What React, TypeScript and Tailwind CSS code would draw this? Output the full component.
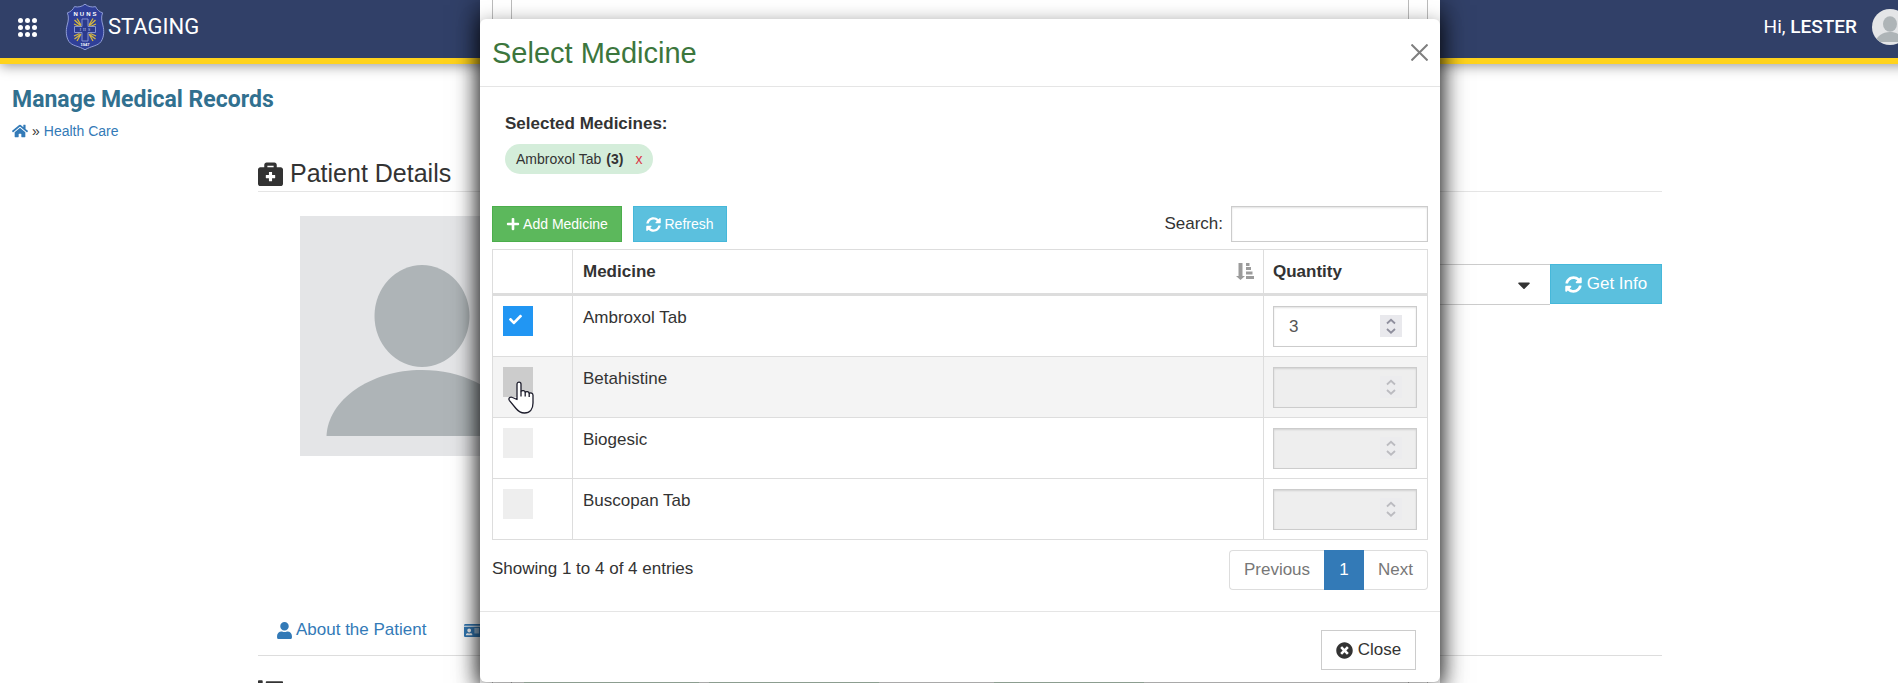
import React, { useState } from 'react';
import {
  FaBriefcaseMedical,
  FaCaretDown,
  FaCheck,
  FaHome,
  FaIdCard,
  FaList,
  FaPlus,
  FaSyncAlt,
  FaTimesCircle,
  FaUser,
} from 'react-icons/fa';

interface Medicine {
  id: number;
  name: string;
}

const MEDICINES: Medicine[] = [
  { id: 1, name: 'Ambroxol Tab' },
  { id: 2, name: 'Betahistine' },
  { id: 3, name: 'Biogesic' },
  { id: 4, name: 'Buscopan Tab' },
];

const HOVERED_ID = 2;

const SchoolCrest: React.FC = () => (
  <svg viewBox="0 0 40 48" className="h-12 w-10" aria-hidden="true">
    <path
      d="M20 1.2 C17 3.6 13 4.6 9.5 3.6 C8 6.6 5.6 9 2.4 9.8 C4 14 3.4 18 2.2 22 C0.6 28 1 34 4 38.6 C7 43 14 43 20 46.8 C26 43 33 43 36 38.6 C39 34 39.4 28 37.8 22 C36.6 18 36 14 37.6 9.8 C34.4 9 32 6.6 30.5 3.6 C27 4.6 23 3.6 20 1.2 Z"
      fill="#2f3f98"
      stroke="#8f9cd6"
      strokeWidth="1"
    />
    <g stroke="#d6b83e" strokeWidth="1.3">
      <path d="M16 23 L9.5 17 M16 22 L12 15.5 M14.5 23.500 L9 21 M24 23 L30.5 17 M24 22 L28 15.5 M25.5 23.500 L31 21" />
      <path d="M16 31 L9.5 36 M16 31 L12 38 M14.5 30.500 L9 33 M24 31 L30.5 36 M24 31 L28 38 M25.5 30.500 L31 33" />
    </g>
    <path
      d="M17 16 H23 V23.500 H30.5 V29.5 H23 V38 H17 V29.5 H9.5 V23.500 H17 Z"
      fill="#2b3a8c"
      stroke="#8f9cd6"
      strokeWidth="0.9"
    />
    <text x="21" y="13.2" textAnchor="middle" fontSize="6" fontWeight="700" letterSpacing="2" fill="#fff" fontFamily="Liberation Sans, sans-serif">NUNS</text>
    <text x="21" y="28" textAnchor="middle" fontSize="4" letterSpacing="2" fill="#c5cdf0" fontFamily="Liberation Serif, serif">IHS</text>
    <text x="20" y="42.5" textAnchor="middle" fontSize="4" fontWeight="700" fill="#fff" fontFamily="Liberation Sans, sans-serif">1947</text>
  </svg>
);

const PersonImage: React.FC<{ className: string }> = ({ className }) => (
  <svg viewBox="0 0 244 240" className={className} preserveAspectRatio="none" aria-hidden="true">
    <rect width="244" height="240" fill="#e4e5e7" />
    <ellipse cx="122" cy="100" rx="47.5" ry="51" fill="#aeb4b7" />
    <path d="M26.500 220 C28 184 70 154 122 154 C174 154 216 184 217.500 220 Z" fill="#aeb4b7" />
  </svg>
);

const SortIcon: React.FC = () => (
  <svg viewBox="0 0 18 17" className="h-[17px] w-[18px] shrink-0" fill="#9b9b9b" aria-hidden="true">
    <path d="M2.500 0 H6.500 V13 H9 L4.500 17 L0 13 H2.500 Z" />
    <path d="M10 0 H13.500 V3 H10 Z M10 4 H15 V7 H10 Z M10 8.500 H16.500 V11.500 H10 Z M10 13 H18 V16 H10 Z" />
  </svg>
);

const HandCursor: React.FC = () => (
  <svg viewBox="0 0 26 33" className="pointer-events-none absolute left-[15px] top-[24px] h-[33px] w-[26px]" aria-hidden="true">
    <path
      d="M9 18.500 V3.200 C9 0.400 13 0.400 13 3.200 V10.500 C14 9 17 9.500 17.200 11.300 C18.200 10 21 10.500 21.200 12.500 C22.500 11.300 25 12 25 14.300 V22 C25 28 22 32 16.500 32 C12.500 32 10 30 8 27.500 L1.300 19.300 C0 17 2.500 15.300 4.500 16.500 Z"
      fill="#fff"
      stroke="#1c1c2b"
      strokeWidth="1.3"
      strokeLinejoin="round"
    />
    <path d="M13 10.500 V15.500 M17.200 11.300 V15.500 M21.200 12.500 V16" fill="none" stroke="#1c1c2b" strokeWidth="1.3" />
  </svg>
);

const TopBar: React.FC = () => (
  <header className="flex h-16 items-center border-b-[6px] border-[#ffd31c] bg-[#314068] pb-1 pl-[18px] pr-3 font-[Roboto,sans-serif] text-white shadow-[0_2px_12px_rgba(0,0,0,0.4)]">
    <button type="button" aria-label="Open menu">
      <svg viewBox="0 0 19 19" className="size-[19px]" fill="#fff" aria-hidden="true">
        {[2.5, 9.5, 16.5].map((y) =>
          [2.5, 9.5, 16.5].map((x) => <circle key={`${x}-${y}`} cx={x} cy={y} r="2.5" />)
        )}
      </svg>
    </button>
    <a href="#home" className="ml-7 flex items-center">
      <SchoolCrest />
      <span className="ml-[3px] text-[22px] leading-7">STAGING</span>
    </a>
    <div className="ml-auto flex items-center gap-[15px]">
      <span className="text-[19px] leading-6">
        Hi, <strong className="font-medium">LESTER</strong>
      </span>
      <PersonImage className="size-9 rounded-full" />
    </div>
  </header>
);

const PatientPage: React.FC = () => (
  <main>
    <div className="px-3 pt-[22px]">
      <h1 className="font-[Roboto,sans-serif] text-[23px] font-bold leading-7 text-[#31708f]">Manage Medical Records</h1>
      <nav className="mt-1.5 flex items-center gap-1 text-[14px] leading-[22px] text-[#337ab7]" aria-label="Breadcrumb">
        <a href="#home" aria-label="Home">
          <FaHome className="size-4" />
        </a>
        <span className="text-[#333]">»</span>
        <a href="#health-care">Health Care</a>
      </nav>
    </div>

    <div className="mx-[258px] mt-4">
      <h2 className="flex items-center gap-[7px] border-b border-[#e5e5e5] pb-0.5 text-[25px] leading-[31px]">
        <FaBriefcaseMedical className="size-[25px]" />
        Patient Details
      </h2>

      <div className="mt-6 flex items-start pl-[42px]">
        <PersonImage className="h-[240px] w-[244px]" />
        <div className="ml-auto mt-12 flex w-[600px]">
          <button type="button" aria-label="Select record" className="flex h-[41px] flex-1 items-center justify-end border border-r-0 border-[#ccc] pr-4">
            <FaCaretDown className="size-5" />
          </button>
          <button type="button" className="flex h-10 w-28 items-center justify-center gap-[5px] border border-[#46b8da] bg-[#5bc0de] text-[17px] text-white">
            <FaSyncAlt className="size-[17px]" />
            Get Info
          </button>
        </div>
      </div>

      <nav className="mt-[149px] flex h-[51px] items-center gap-[38px] border-b border-[#ddd] pl-[18px] text-[17px] text-[#337ab7]" aria-label="Patient sections">
        <a href="#about" className="flex items-center gap-[3px]">
          <FaUser className="size-[17px]" />
          About the Patient
        </a>
        <a href="#records" aria-label="Records">
          <FaIdCard className="size-[17px]" />
        </a>
      </nav>
      <FaList className="mt-[22px] size-[25px]" />
    </div>
  </main>
);

// Dialog that stays open underneath the medicine picker.
const ParentDialog: React.FC = () => (
  <div className="absolute inset-0 flex justify-center">
    <div className="flex w-[960px] justify-center bg-white px-3 shadow-[0_5px_25px_rgba(0,0,0,0.8)]">
      <div className="flex-1 border-x border-[#bbb] px-[18px]">
        <div className="flex h-full items-end gap-2.5 border-x border-[#bbb]">
          <div className="ml-3 h-px w-[175px] bg-[#d4edda]" />
          <div className="h-px w-[170px] bg-[#d4edda]" />
          <div className="ml-[105px] h-px w-[150px] bg-[#d4edda]" />
        </div>
      </div>
    </div>
  </div>
);

interface QuantityInputProps {
  name: string;
  value: string;
  disabled: boolean;
  onChange: (value: string) => void;
}

const QuantityInput: React.FC<QuantityInputProps> = ({ name, value, disabled, onChange }) => (
  <div className="relative">
    <input
      type="number"
      aria-label={`Quantity of ${name}`}
      value={value}
      disabled={disabled}
      onChange={(e) => onChange(e.target.value)}
      className="block h-[41px] w-full appearance-none rounded-none border border-[#ccc] bg-white px-[15px] text-[17px] text-[#555] shadow-[inset_0_1px_2px_rgba(0,0,0,0.12)] outline-none [appearance:textfield] disabled:bg-[#eee]"
    />
    <span className={`pointer-events-none absolute right-[15px] top-[9px] flex size-[22px] items-center justify-center ${disabled ? 'bg-[#ececee] text-[#bbbbc0]' : 'bg-[#e9e9ed] text-[#8f8f9d]'}`}>
      <svg viewBox="0 0 10 16" className="h-4 w-2.5" fill="none" stroke="currentColor" strokeWidth="1.8" aria-hidden="true">
        <path d="M1 5.500 L5 1.800 L9 5.500 M1 11 L5 14.700 L9 11" />
      </svg>
    </span>
  </div>
);

const MedicineDialog: React.FC = () => {
  const [quantities, setQuantities] = useState<Record<number, string>>({ 1: '3' });
  const [search, setSearch] = useState('');

  const toggle = (id: number) =>
    setQuantities((prev) => {
      const next = { ...prev };
      if (id in next) delete next[id];
      else next[id] = '1';
      return next;
    });

  const rows = MEDICINES.filter((m) => m.name.toLowerCase().includes(search.toLowerCase()));

  return (
    <div className="absolute inset-0 flex items-start justify-center pt-[19px]">
      <section role="dialog" aria-label="Select Medicine" className="w-[960px] rounded-md bg-white shadow-[0_5px_20px_rgba(0,0,0,0.5)]">
        <div className="flex h-[68px] items-center justify-between border-b border-[#e5e5e5] px-3">
          <h2 className="text-[29px] leading-8 text-[#3c763d]">Select Medicine</h2>
          <button type="button" aria-label="Dismiss">
            <svg viewBox="0 0 17 17" className="size-[17px]" stroke="#7f7f7f" strokeWidth="2" aria-hidden="true">
              <path d="M0.500 0.500 L16.500 16.500 M16.500 0.500 L0.500 16.500" />
            </svg>
          </button>
        </div>

        <div className="px-3 pb-[21px] pt-[25px]">
          <div className="px-[13px]">
            <h3 className="text-[17px] font-bold leading-6">Selected Medicines:</h3>
            <div className="mt-2 flex gap-2">
              {MEDICINES.filter((m) => m.id in quantities).map((m) => (
                <span key={m.id} className="flex h-[30px] items-center rounded-full bg-[#d4edda] px-[11px] text-[14px]">
                  {m.name}
                  <strong className="ml-[5px]">({quantities[m.id]})</strong>
                  <button type="button" aria-label={`Remove ${m.name}`} onClick={() => toggle(m.id)} className="ml-3 text-[14px] text-[#dc3545]">
                    x
                  </button>
                </span>
              ))}
            </div>
          </div>

          <div className="mt-8 flex items-center text-[14px] text-white">
            <button type="button" className="flex h-9 w-[130px] items-center justify-center gap-[3px] border border-[#4cae4c] bg-[#5cb85c]">
              <FaPlus className="size-[14px]" />
              Add Medicine
            </button>
            <button type="button" className="ml-[11px] flex h-9 w-[94px] items-center justify-center gap-[3px] border border-[#46b8da] bg-[#5bc0de]">
              <FaSyncAlt className="size-[15px]" />
              Refresh
            </button>
            <label className="ml-auto flex items-center gap-2 text-[17px] text-[#333]">
              Search:
              <input
                type="search"
                value={search}
                onChange={(e) => setSearch(e.target.value)}
                className="h-9 w-[197px] border border-[#ccc] px-2 text-[14px] shadow-[inset_0_1px_2px_rgba(0,0,0,0.12)] outline-none"
              />
            </label>
          </div>

          <table className="mt-[7px] w-full table-fixed border-separate border-spacing-0 border-l border-t border-[#ddd] text-left text-[17px] leading-6">
            <thead>
              <tr>
                <th className="h-[46px] w-20 border-b-[3px] border-r border-[#ddd]" aria-label="Selected" />
                <th className="border-b-[3px] border-r border-[#ddd] pl-2.5 pr-[9px]">
                  <span className="flex items-center justify-between">
                    Medicine
                    <SortIcon />
                  </span>
                </th>
                <th className="w-[164px] border-b-[3px] border-r border-[#ddd] px-[9px]">Quantity</th>
              </tr>
            </thead>
            <tbody>
              {rows.map((m) => {
                const checked = m.id in quantities;
                const hovered = m.id === HOVERED_ID;
                return (
                  <tr key={m.id} className={hovered ? 'bg-[#f4f4f4]' : 'bg-white'}>
                    <td className="h-[61px] border-b border-r border-[#ddd] p-0 align-top">
                      <label className="relative block cursor-pointer pl-2.5 pt-2.5">
                        <input
                          type="checkbox"
                          aria-label={m.name}
                          checked={checked}
                          onChange={() => toggle(m.id)}
                          className={`block size-[30px] appearance-none checked:bg-[#2196f3] ${hovered ? 'bg-[#ccc]' : 'bg-[#eee]'}`}
                        />
                        {checked && <FaCheck className="absolute left-4 top-[17px] size-[13px] text-white" />}
                        {hovered && <HandCursor />}
                      </label>
                    </td>
                    <td className="border-b border-r border-[#ddd] px-2.5 pt-2.5 align-top">{m.name}</td>
                    <td className="border-b border-r border-[#ddd] py-0 pl-[9px] pr-2.5 pt-2.5 align-top">
                      <QuantityInput
                        name={m.name}
                        value={quantities[m.id] ?? ''}
                        disabled={!checked}
                        onChange={(value) => setQuantities((prev) => ({ ...prev, [m.id]: value }))}
                      />
                    </td>
                  </tr>
                );
              })}
            </tbody>
          </table>

          <div className="mt-2.5 flex items-start justify-between text-[17px]">
            <p className="pt-[7px] leading-6">Showing 1 to 4 of 4 entries</p>
            <div className="flex h-10 text-[#777]">
              <button type="button" className="w-[95px] rounded-l border border-r-0 border-[#ddd]">Previous</button>
              <button type="button" className="w-10 bg-[#337ab7] text-white">1</button>
              <button type="button" className="w-16 rounded-r border border-l-0 border-[#ddd]">Next</button>
            </div>
          </div>
        </div>

        <div className="flex justify-end border-t border-[#e5e5e5] px-6 pb-3 pt-[18px]">
          <button type="button" className="flex h-10 w-[95px] items-center justify-center gap-[5px] border border-[#ccc] text-[17px]">
            <FaTimesCircle className="size-[17px]" />
            Close
          </button>
        </div>
      </section>
    </div>
  );
};

export default function App() {
  return (
    <div className="h-screen overflow-hidden bg-white font-['Liberation_Sans',Arial,sans-serif] text-[#333]">
      {/* the page runs a little past the right edge of the window */}
      <div className="relative -mr-[22px] h-full overflow-hidden">
        <TopBar />
        <PatientPage />
        <ParentDialog />
        <MedicineDialog />
      </div>
    </div>
  );
}
